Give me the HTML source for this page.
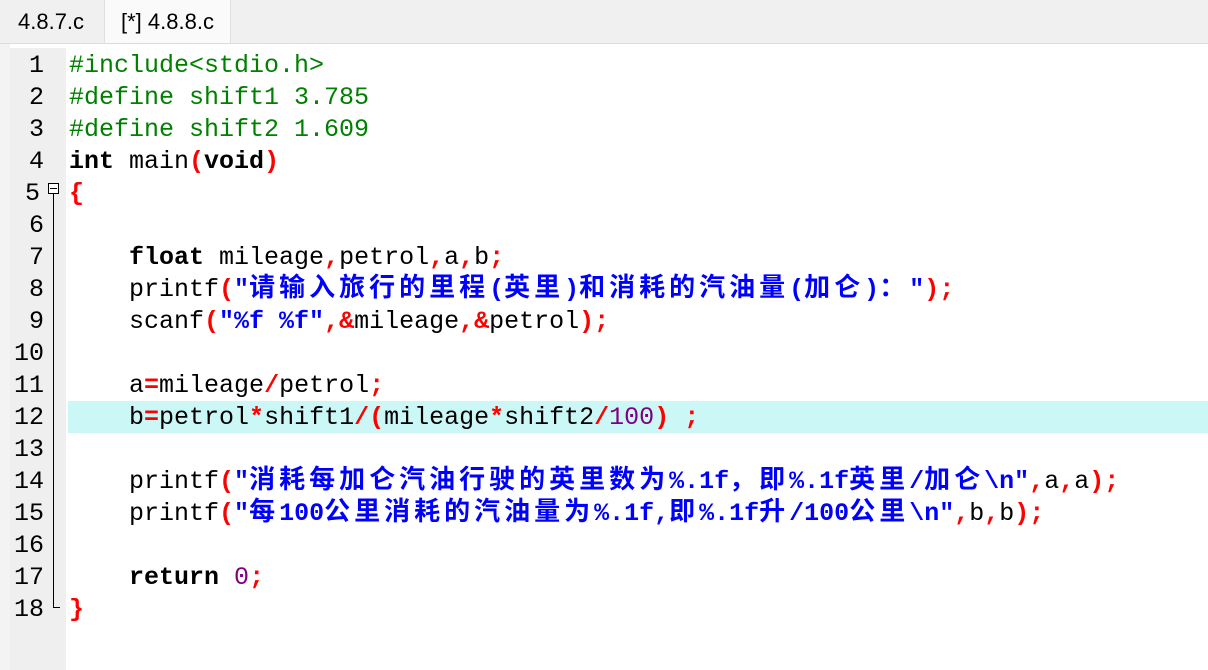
<!DOCTYPE html>
<html><head><meta charset="utf-8"><style>
body{margin:0;width:1208px;height:670px;background:#fff;overflow:hidden;position:relative;font-family:"Liberation Sans","Noto Sans CJK SC",sans-serif}
.tabbar{position:absolute;left:0;top:0;width:1208px;height:43px;background:#f0f0f0;border-bottom:1px solid #dcdcdc}
.tab{position:absolute;top:0;height:43px;font-size:22px;line-height:44px;color:#000}
.t1{left:18px}
.t2{left:104px;width:127px;background:#fafafa;border-left:1px solid #e0e0e0;border-right:1px solid #e0e0e0;padding-left:16px;box-sizing:border-box}
.left{position:absolute;left:0;top:44px;width:10px;height:626px;background:#f3f3f3}
.gut{position:absolute;left:10px;top:48px;width:56px;height:622px;background:#efefef}
.code{position:absolute;left:0;top:50px;width:1208px;font-family:"Liberation Mono","Noto Sans CJK SC",monospace;font-size:25px}
.ln{height:32px;line-height:32px;white-space:pre;position:relative}
.n{position:absolute;left:10px;width:34px;text-align:right;color:#000}
.c{position:absolute;left:69px;top:0;height:32px}
.hl{position:absolute;left:68px;right:0;top:-1px;height:32px;background:#ccf7f7}
.g{color:#008000}.k{font-weight:bold;color:#000}.o{font-weight:bold;color:#f00}.s{font-weight:bold;color:#00f}.p{color:#800080}
.z{font-family:"Noto Sans CJK SC",sans-serif;font-size:26px;letter-spacing:4px;line-height:0}
</style></head><body>
<div class="tabbar"><div class="tab t1">4.8.7.c</div><div class="tab t2">[*] 4.8.8.c</div></div>
<div class="left"></div><div class="gut"></div>
<div style="position:absolute;left:48px;top:183px;width:11px;height:11px;border:1px solid #000;background:#fff;box-sizing:border-box"><div style="position:absolute;left:1px;right:1px;top:4px;height:1px;background:#000"></div></div>
<div style="position:absolute;left:53px;top:194px;width:1px;height:414px;background:#000"></div>
<div style="position:absolute;left:53px;top:607px;width:7px;height:1px;background:#000"></div>
<div class="code">
<div class="ln"><span class="n">1</span><span class="c g">#include&lt;stdio.h&gt;</span></div>
<div class="ln"><span class="n">2</span><span class="c g">#define shift1 3.785</span></div>
<div class="ln"><span class="n">3</span><span class="c g">#define shift2 1.609</span></div>
<div class="ln"><span class="n">4</span><span class="c"><span class="k">int</span> main<span class="o">(</span><span class="k">void</span><span class="o">)</span></span></div>
<div class="ln"><span class="n" style="left:6px">5</span><span class="c o">{</span></div>
<div class="ln"><span class="n">6</span></div>
<div class="ln"><span class="n">7</span><span class="c">    <span class="k">float</span> mileage<span class="o">,</span>petrol<span class="o">,</span>a<span class="o">,</span>b<span class="o">;</span></span></div>
<div class="ln"><span class="n">8</span><span class="c">    printf<span class="o">(</span><span class="s">"<span class="z">请输入旅行的里程</span>(<span class="z">英里</span>)<span class="z">和消耗的汽油量</span>(<span class="z">加仑</span>)<span class="z">：</span>"</span><span class="o">);</span></span></div>
<div class="ln"><span class="n">9</span><span class="c">    scanf<span class="o">(</span><span class="s">"%f %f"</span><span class="o">,&amp;</span>mileage<span class="o">,&amp;</span>petrol<span class="o">);</span></span></div>
<div class="ln"><span class="n">10</span></div>
<div class="ln"><span class="n">11</span><span class="c">    a<span class="o">=</span>mileage<span class="o">/</span>petrol<span class="o">;</span></span></div>
<div class="ln"><div class="hl"></div><span class="n">12</span><span class="c">    b<span class="o">=</span>petrol<span class="o">*</span>shift1<span class="o">/(</span>mileage<span class="o">*</span>shift2<span class="o">/</span><span class="p">100</span><span class="o">)</span> <span class="o">;</span></span></div>
<div class="ln"><span class="n">13</span></div>
<div class="ln"><span class="n">14</span><span class="c">    printf<span class="o">(</span><span class="s">"<span class="z">消耗每加仑汽油行驶的英里数为</span>%.1f<span class="z">，即</span>%.1f<span class="z">英里</span>/<span class="z">加仑</span>\n"</span><span class="o">,</span>a<span class="o">,</span>a<span class="o">);</span></span></div>
<div class="ln"><span class="n">15</span><span class="c">    printf<span class="o">(</span><span class="s">"<span class="z">每</span>100<span class="z">公里消耗的汽油量为</span>%.1f,<span class="z">即</span>%.1f<span class="z">升</span>/100<span class="z">公里</span>\n"</span><span class="o">,</span>b<span class="o">,</span>b<span class="o">);</span></span></div>
<div class="ln"><span class="n">16</span></div>
<div class="ln"><span class="n">17</span><span class="c">    <span class="k">return</span> <span class="p">0</span><span class="o">;</span></span></div>
<div class="ln"><span class="n">18</span><span class="c o">}</span></div>
</div>
</body></html>
